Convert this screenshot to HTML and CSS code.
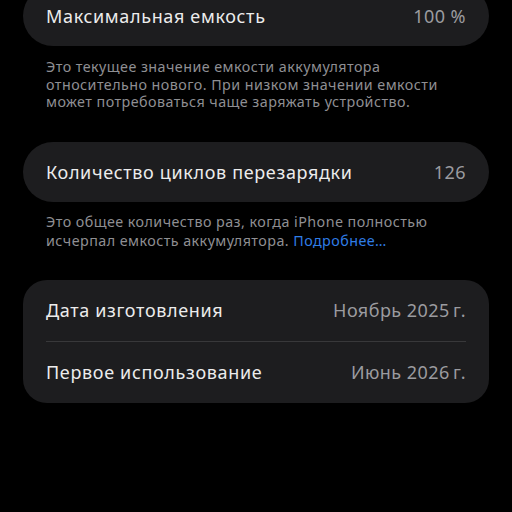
FILE: index.html
```html
<!DOCTYPE html>
<html lang="ru">
<head>
<meta charset="utf-8">
<link rel="stylesheet" href="styles.css">
</head>
<body>
<div class="page">
  <div class="card pill first">
    <div class="row"><span class="label">Максимальная емкость</span><span class="value">100 %</span></div>
  </div>
  <p class="note note1">Это текущее значение емкости аккумулятора<br>относительно нового. При низком значении емкости<br>может потребоваться чаще заряжать устройство.</p>

  <div class="card pill">
    <div class="row"><span class="label">Количество циклов перезарядки</span><span class="value">126</span></div>
  </div>
  <p class="note note2">Это общее количество раз, когда iPhone полностью<br>исчерпал емкость аккумулятора. <span class="link">Подробнее…</span></p>

  <div class="card group">
    <div class="row"><span class="label">Дата изготовления</span><span class="value">Ноябрь 2025&#8201;г.</span></div>
    <div class="sep"></div>
    <div class="row"><span class="label">Первое использование</span><span class="value">Июнь 2026&#8201;г.</span></div>
  </div>
</div>
</body>
</html>
```

FILE: styles.css
```css
html, body {
  margin: 0;
  padding: 0;
  background: #000;
  height: 100%;
  overflow: hidden;
}
body {
  font-family: "Noto Sans", "Liberation Sans", Arial, sans-serif;
}
.page {
  padding: 0 23px;
  margin-top: -14px;
}
.card {
  background: #1d1d1f;
}
.pill {
  border-radius: 30px;
}
.group {
  border-radius: 24px;
}
.row {
  height: 60px;
  display: flex;
  align-items: center;
  justify-content: space-between;
  padding: 0 23px;
}
.group .row {
  height: 61px;
}
.label {
  color: #ececec;
  font-size: 18px;
  letter-spacing: 0.65px;
}
.value {
  color: #9b9b9f;
  font-size: 18px;
  letter-spacing: 0.45px;
}
.sep {
  height: 1px;
  background: #38383a;
  margin: 0 23px;
}
.note {
  margin: 0;
  color: #8f8f93;
  font-size: 14.3px;
  letter-spacing: 0.45px;
  line-height: 17.5px;
  padding: 0 23px;
  white-space: nowrap;
}
.note1 {
  padding-top: 12px;
  padding-bottom: 31px;
}
.note2 {
  padding-top: 10px;
  line-height: 19px;
  padding-bottom: 30px;
}
.link {
  color: #2f7de6;
}
```
